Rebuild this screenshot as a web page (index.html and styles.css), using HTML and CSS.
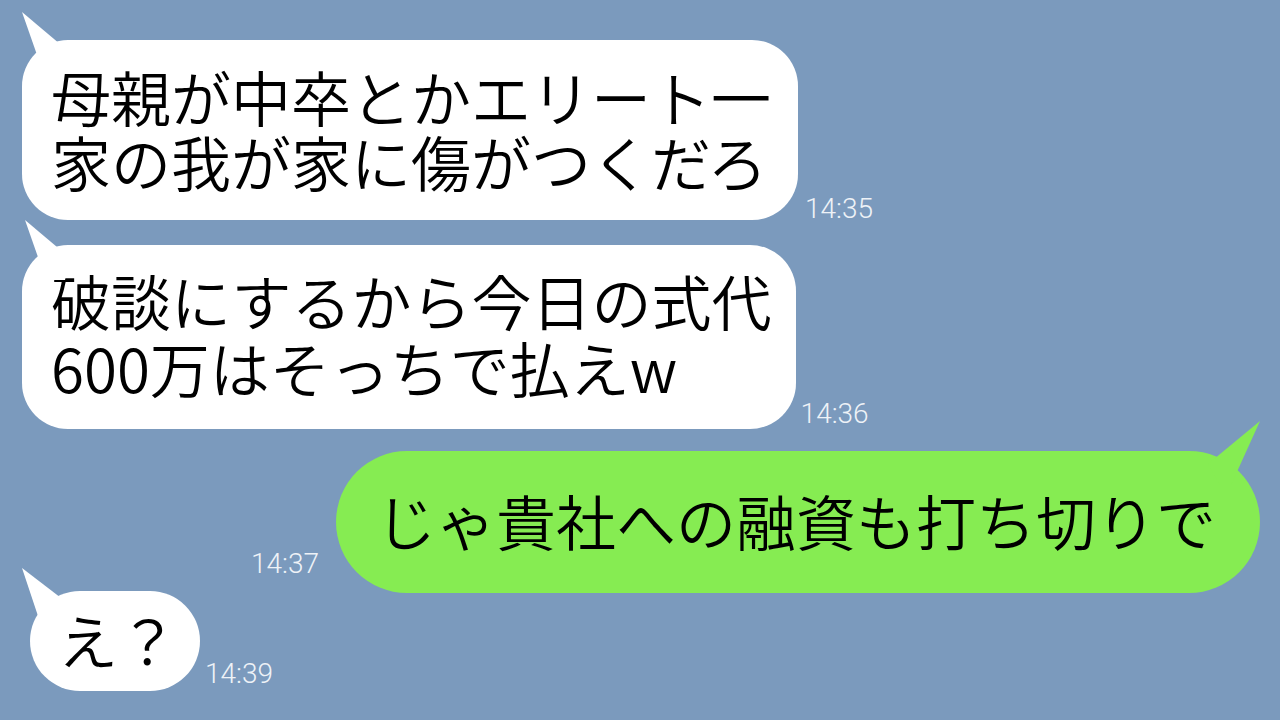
FILE: index.html
```html
<!DOCTYPE html>
<html lang="ja">
<head>
<meta charset="utf-8">
<title>chat</title>
<link rel="stylesheet" href="styles.css">
</head>
<body>
<main class="chat">
  <div class="row row-1">
    <div class="bubble bubble-white bubble-big tail-left">母親が中卒とかエリート一<br>家の我が家に傷がつくだろ</div>
    <span class="time time-1">14:35</span>
  </div>
  <div class="row row-2">
    <div class="bubble bubble-white bubble-big bubble-2 tail-left">破談にするから今日の式代<br>600万はそっちで払えw</div>
    <span class="time time-2">14:36</span>
  </div>
  <div class="row row-3">
    <span class="time time-3">14:37</span>
    <div class="bubble bubble-green tail-right">じゃ貴社への融資も打ち切りで</div>
  </div>
  <div class="row row-4">
    <div class="bubble bubble-white bubble-small tail-left">え？</div>
    <span class="time time-4">14:39</span>
  </div>
</main>
</body>
</html>
```
FILE: styles.css
```css
html, body {
  margin: 0;
  padding: 0;
}
body {
  width: 1280px;
  height: 720px;
  overflow: hidden;
  background: #7b9abd;
  font-family: "Noto Sans CJK JP", "Noto Sans", sans-serif;
}
.chat {
  display: flex;
  flex-direction: column;
  padding-top: 40px;
}
.row {
  display: flex;
  align-items: flex-end;
}
.row-1 { padding-left: 22px; }
.row-2 { padding-left: 22px; margin-top: 25px; }
.row-3 { justify-content: flex-end; padding-right: 20px; margin-top: 22px; }
.row-4 { padding-left: 30px; margin-top: -2px; }

.bubble {
  position: relative;
  color: #000;
  font-size: 60px;
  font-weight: 350;
  white-space: nowrap;
}
.bubble-white { background: #ffffff; }
.bubble-green { background: #86ec52; }

.bubble-big {
  border-radius: 46px;
  line-height: 65px;
  padding: 23px 27px 27px 29px;
}
.bubble-2 {
  line-height: 67px;
  padding: 21px 24px 29px 29px;
}
.bubble-green {
  border-radius: 71px;
  height: 142px;
  box-sizing: border-box;
  line-height: 65px;
  padding: 36px 44px 41px 40px;
}
.bubble-small {
  border-radius: 50px;
  height: 100px;
  box-sizing: border-box;
  line-height: 96px;
  padding: 0 22px 4px 28px;
}

.tail-left::before,
.tail-right::before {
  content: "";
  position: absolute;
  width: 60px;
  height: 70px;
  background: inherit;
}
.tail-left::before {
  left: 0;
  top: -28px;
  clip-path: polygon(0 0, 45px 38px, 40px 60px, 21px 60px);
}
.bubble-2.tail-left::before {
  left: 3px;
  top: -25px;
}
.bubble-small.tail-left::before {
  left: -8px;
  top: -23px;
  clip-path: polygon(0 0, 43px 33px, 40px 60px, 20px 60px);
}
.tail-right::before {
  right: 0;
  top: -30px;
  clip-path: polygon(100% 0, calc(100% - 52px) 43px, calc(100% - 40px) 64px, calc(100% - 29px) 64px);
}

.time {
  color: #eef2f7;
  font-family: Roboto, "Noto Sans", sans-serif;
  font-size: 28px;
  font-weight: 300;
  line-height: 28px;
  white-space: nowrap;
}
.time-1 { margin-left: 7px; margin-bottom: -3px; }
.time-2 { margin-left: 5px; margin-bottom: 1px; }
.time-3 { margin-right: 17px; margin-bottom: 15px; }
.time-4 { margin-left: 5px; margin-bottom: 3px; }
```
